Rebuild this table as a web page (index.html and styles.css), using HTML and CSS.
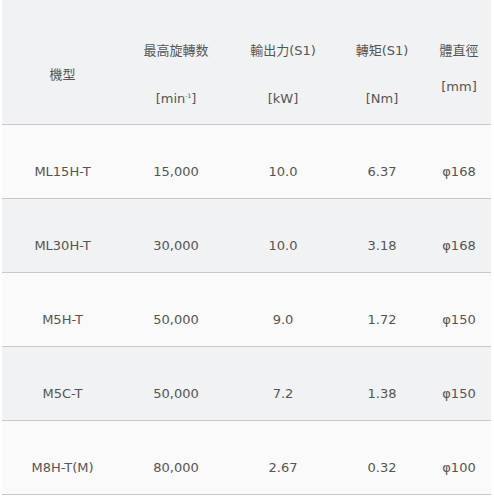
FILE: index.html
```html
<!DOCTYPE html>
<html lang="zh-Hant">
<head>
<meta charset="utf-8">
<link rel="stylesheet" href="styles.css">
</head>
<body>
<table class="spec">
  <colgroup>
    <col class="c1"><col class="c2"><col class="c3"><col class="c4"><col class="c5">
  </colgroup>
  <thead>
    <tr>
      <th class="mid">機型</th>
      <th><span class="l1">最高旋轉数</span><span class="l2">[min<sup>-1</sup>]</span></th>
      <th><span class="l1">輸出力(S1)</span><span class="l2">[kW]</span></th>
      <th><span class="l1">轉矩(S1)</span><span class="l2">[Nm]</span></th>
      <th><span class="l1">體直徑</span><span class="l2 short">[mm]</span></th>
    </tr>
  </thead>
  <tbody>
    <tr class="light"><td>ML15H-T</td><td>15,000</td><td>10.0</td><td>6.37</td><td>φ168</td></tr>
    <tr class="gray"><td>ML30H-T</td><td>30,000</td><td>10.0</td><td>3.18</td><td>φ168</td></tr>
    <tr class="light"><td>M5H-T</td><td>50,000</td><td>9.0</td><td>1.72</td><td>φ150</td></tr>
    <tr class="gray"><td>M5C-T</td><td>50,000</td><td>7.2</td><td>1.38</td><td>φ150</td></tr>
    <tr class="light"><td>M8H-T(M)</td><td>80,000</td><td>2.67</td><td>0.32</td><td>φ100</td></tr>
  </tbody>
</table>
</body>
</html>
```
FILE: styles.css
```css
html, body {
  margin: 0;
  padding: 0;
  background: #ffffff;
}
.spec {
  margin-left: 2px;
  width: 489px;
  table-layout: fixed;
  border-collapse: collapse;
  font-family: "DejaVu Sans", "Noto Sans CJK TC", sans-serif;
  font-size: 13px;
  color: #555555;
}
.c1 { width: 121px; }
.c2 { width: 106px; }
.c3 { width: 108px; }
.c4 { width: 90px; }
.c5 { width: 64px; }
.spec th {
  background: #f1f2f4;
  font-weight: normal;
  text-align: center;
  vertical-align: top;
  height: 124px;
  padding: 0;
  line-height: 20px;
  border-bottom: 1px solid #c8c8cc;
  box-sizing: border-box;
}
.spec th.mid {
  vertical-align: top;
  padding-top: 65px;
}
.l1 {
  display: block;
  margin-top: 41px;
}
.l2 {
  display: block;
  margin-top: 28px;
}
.l2.short {
  margin-top: 16px;
}
.spec sup {
  font-size: 6px;
  vertical-align: 5px;
  line-height: 0;
}
.spec td {
  text-align: center;
  padding: 37px 0 16px;
  line-height: 20px;
  border-bottom: 1px solid #c8c8cc;
}
.light td { background: #fafafa; }
.gray td { background: #f1f2f4; }
```
